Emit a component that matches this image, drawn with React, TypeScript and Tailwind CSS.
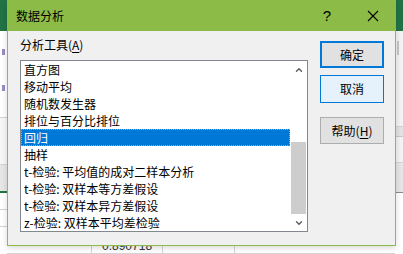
import { ChevronUp, ChevronDown } from "lucide-react";

const tools = [
    "直方图",
    "移动平均",
    "随机数发生器",
    "排位与百分比排位",
    "回归",
    "抽样",
    "t-检验: 平均值的成对二样本分析",
    "t-检验: 双样本等方差假设",
    "t-检验: 双样本异方差假设",
    "z-检验: 双样本平均差检验",
];

const selected = 4;

function SheetBackground() {
    return (
        <div className="flex flex-col w-full h-full">
            <div className="h-[31px] bg-[#217346]" />
            <div className="flex flex-1">
                {/* left edge of the sheet */}
                <div className="w-[7px] flex flex-col">
                    <div className="h-[87px] bg-white border-b border-[#d4d4d4] flex flex-col gap-[30px] pt-[18px]">
                        <div className="h-[6px] w-[3px] ml-[2px] bg-[#9a8cc4]" />
                        <div className="h-[6px] w-[3px] ml-[2px] bg-[#9a8cc4]" />
                    </div>
                    <div className="h-[47px] bg-[#f7f7f7] border-b border-[#d4d4d4]" />
                    <div className="h-[28px] bg-[#e6e6e6] border-b-2 border-[#217346]" />
                    <div className="h-[17px] bg-white border-b border-[#d4d4d4]" />
                    <div className="h-[17px] bg-white border-b border-[#d4d4d4]" />
                    <div className="flex-1 bg-white" />
                </div>
                <div className="flex-1 flex flex-col">
                    <div className="flex-1" />
                    <div className="h-[20px] bg-white border-b border-[#d4d4d4] flex text-[12px] leading-[12px] text-[#333] font-['Liberation_Sans',sans-serif]">
                        <div className="w-[85px] border-r border-[#d4d4d4]" />
                        <div className="w-[71px] border-r border-[#d4d4d4] overflow-hidden pl-[10px] pt-[6px]">0.890718</div>
                        <div className="w-[72px] border-r border-[#d4d4d4]" />
                        <div className="flex-1" />
                    </div>
                </div>
                {/* right edge of the sheet */}
                <div className="w-[8px] flex flex-col bg-[#f3f3f3]">
                    <div className="h-[10px]" />
                    <div className="h-[14px] w-[2px] ml-[2px] bg-[#c6c6c6]" />
                    <div className="h-[72px] border-b border-[#d4d4d4]" />
                    <div className="h-[10px] bg-[#e2e2e2] border-b border-[#c8c8c8]" />
                    <div className="h-[26px] border-b border-[#d4d4d4]" />
                    <div className="h-[30px] bg-[#e6e6e6] border-b border-[#8a8a8a]" />
                    <div className="flex-1 bg-white" />
                </div>
            </div>
        </div>
    );
}

export default function App() {
    return (
        <div className="relative w-[403px] h-[254px] overflow-hidden bg-white font-['Noto_Sans_CJK_SC','Microsoft_YaHei',sans-serif] text-[12px] text-black">
            <SheetBackground />

            {/* dialog window */}
            <div className="absolute left-[7px] top-0 w-[389px] h-[246px] bg-[#f0f0f0] border-x border-b border-[#8cbc47] flex flex-col shadow-[0_2px_6px_rgba(0,0,0,0.15)]">
                <div className="h-[31px] bg-[#8cbc47] flex items-center pl-[8px] pr-[15px]">
                    <span className="text-[12px] leading-none">数据分析</span>
                    <span className="ml-auto mr-[36px] text-[15px] leading-none font-['Liberation_Sans',sans-serif]">?</span>
                    <svg width="12" height="12" viewBox="0 0 12 12" className="mr-[1px]">
                        <path d="M1 1 L11 11 M11 1 L1 11" stroke="#000" strokeWidth="1.1" />
                    </svg>
                </div>

                <div className="flex flex-1 pl-[12px] pr-[10px]">
                    <div className="flex flex-col w-[288px]">
                        <div className="h-[29px] pt-[5px] leading-[17px]">
                            分析工具(<span className="underline underline-offset-2">A</span>)
                        </div>
                        <div className="h-[172px] border border-[#828790] bg-white flex">
                            <div className="flex-1 flex flex-col">
                                {tools.map((t, i) => (
                                    <div
                                        key={t}
                                        className={`h-[17px] leading-[16px] pl-[2px] whitespace-nowrap ${i === selected
                                            ? "bg-[#0078d7] text-white border border-dotted border-[#e9a246]"
                                            : "border border-transparent"
                                            }`}
                                    >
                                        {t}
                                    </div>
                                ))}
                            </div>
                            <div className="w-[17px] flex flex-col">
                                <div className="h-[17px] flex items-center justify-center text-[#606060]">
                                    <ChevronUp className="w-[10px] h-[10px]" strokeWidth={3.5} />
                                </div>
                                <div className="h-[64px]" />
                                <div className="h-[72px] mx-[1px] bg-[#cdcdcd]" />
                                <div className="flex-1 flex items-center justify-center text-[#606060]">
                                    <ChevronDown className="w-[10px] h-[10px]" strokeWidth={3.5} />
                                </div>
                            </div>
                        </div>
                    </div>

                    <div className="flex flex-col ml-[12px] pt-[10px] w-[64px] gap-[7px]">
                        <button className="h-[27px] bg-[#e1e1e1] border-2 border-[#0078d7] leading-none">确定</button>
                        <button className="h-[28px] bg-[#e5f1fb] border border-[#0078d7] leading-none">取消</button>
                        <button className="h-[27px] mt-[7px] bg-[#e1e1e1] border border-[#adadad] leading-none">
                            帮助(<span className="underline underline-offset-2">H</span>)
                        </button>
                    </div>
                </div>
            </div>
        </div>
    );
}
